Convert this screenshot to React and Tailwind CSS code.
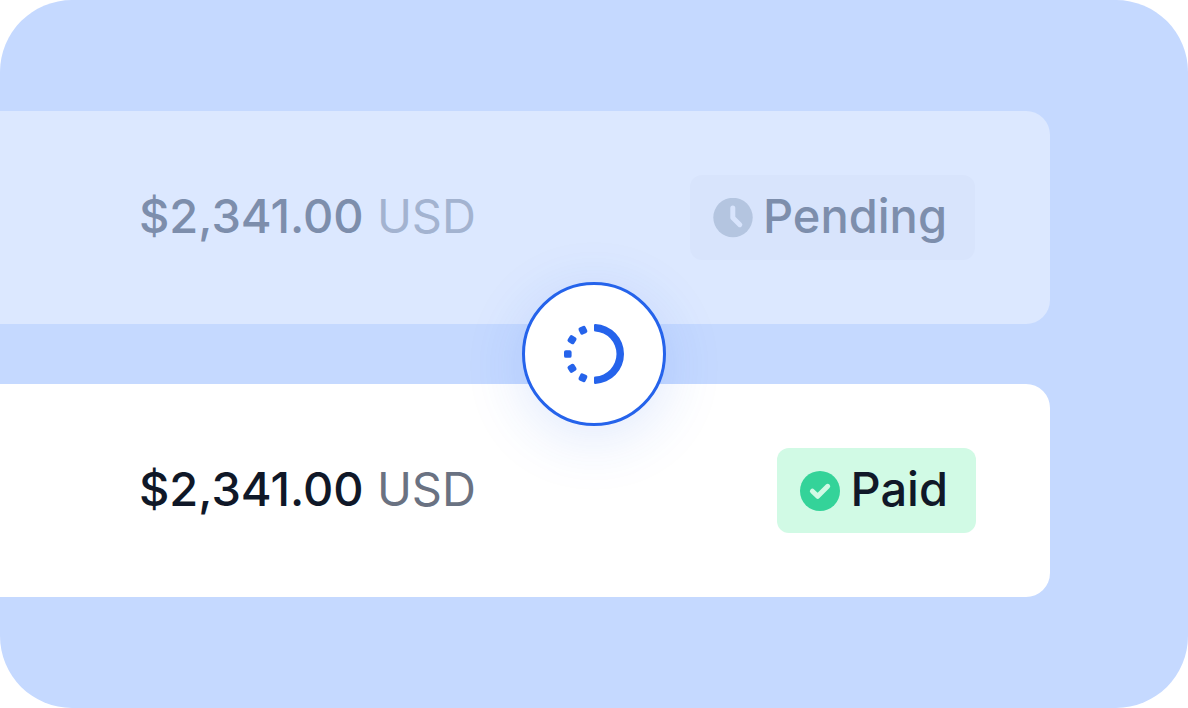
const dotAngles = [-65, -33, 0, 33, 65];

function Amount({ valueClass, currencyClass }) {
  return (
    <p className="pb-1 pl-[139px] text-[47px] leading-[57px] whitespace-nowrap">
      <span className={`font-medium ${valueClass}`}>$2,341.00</span>{" "}
      <span className={`font-normal ${currencyClass}`}>USD</span>
    </p>
  );
}

function Badge({ className, icon, label }) {
  return (
    <div className={`flex items-center gap-2.5 rounded-xl py-3 pr-7 pl-[23px] ${className}`}>
      {icon}
      <span className="pb-1 text-[47px] leading-[57px] font-medium">{label}</span>
    </div>
  );
}

function ClockIcon() {
  return (
    <svg className="size-10 shrink-0" viewBox="0 0 40 40" fill="none" aria-hidden="true">
      <circle cx="20" cy="19.5" r="19.7" fill="#b4c5e0" />
      <path d="M19.8 10.1V19.8L26.8 26.7" stroke="#d8e4fc" strokeWidth="5" strokeLinecap="round" strokeLinejoin="round" />
    </svg>
  );
}

function CheckIcon() {
  return (
    <svg className="size-10 shrink-0" viewBox="0 0 40 40" fill="none" aria-hidden="true">
      <circle cx="20" cy="20" r="20" fill="#34d399" />
      <path d="M12.4 20.2L17.7 25.3L27.7 15.3" stroke="#d1fae5" strokeWidth="5" strokeLinecap="round" strokeLinejoin="round" />
    </svg>
  );
}

function ProgressIcon() {
  return (
    <svg className="size-[60px]" viewBox="0 0 60 60" aria-hidden="true">
      <path
        fill="#2563eb"
        d="M30 1.3Q30 0 31.3 0.03A30 30 0 0 1 60 30A30 30 0 0 1 31.3 59.97Q30 60 30 58.7V53.7Q30 52.5 31.3 52.46A22.5 22.5 0 0 0 52.5 30A22.5 22.5 0 0 0 31.3 7.54Q30 7.5 30 6.3Z"
      />
      {dotAngles.map((angle) => (
        <rect key={angle} x="0" y="26.2" width="7.6" height="7.6" rx="1.9" fill="#2563eb" transform={`rotate(${angle} 30 30)`} />
      ))}
    </svg>
  );
}

export default function App() {
  return (
    <main className="relative flex min-h-screen flex-col justify-center gap-[60px] overflow-hidden rounded-[72px] bg-[#c5d9ff] pr-[138px] font-['Inter',sans-serif]">
      <section className="flex items-center justify-between rounded-r-3xl bg-[#dce8ff] py-16 pr-[75px]">
        <Amount valueClass="text-[#7d8eac]" currencyClass="text-[#a3b3d0]" />
        <Badge className="bg-[#d8e4fc] text-[#7d8eac]" icon={<ClockIcon />} label="Pending" />
      </section>
      <section className="flex items-center justify-between rounded-r-3xl bg-white py-16 pr-[74px]">
        <Amount valueClass="text-gray-900" currencyClass="text-gray-500" />
        <Badge className="bg-[#d1fae5] text-gray-900" icon={<CheckIcon />} label="Paid" />
      </section>
      <div className="pointer-events-none absolute inset-0 flex items-center justify-center">
        <div className="flex size-36 items-center justify-center rounded-full border-3 border-[#2563eb] bg-white shadow-[0_12px_60px_rgba(37,99,235,0.15)]">
          <ProgressIcon />
        </div>
      </div>
    </main>
  );
}
